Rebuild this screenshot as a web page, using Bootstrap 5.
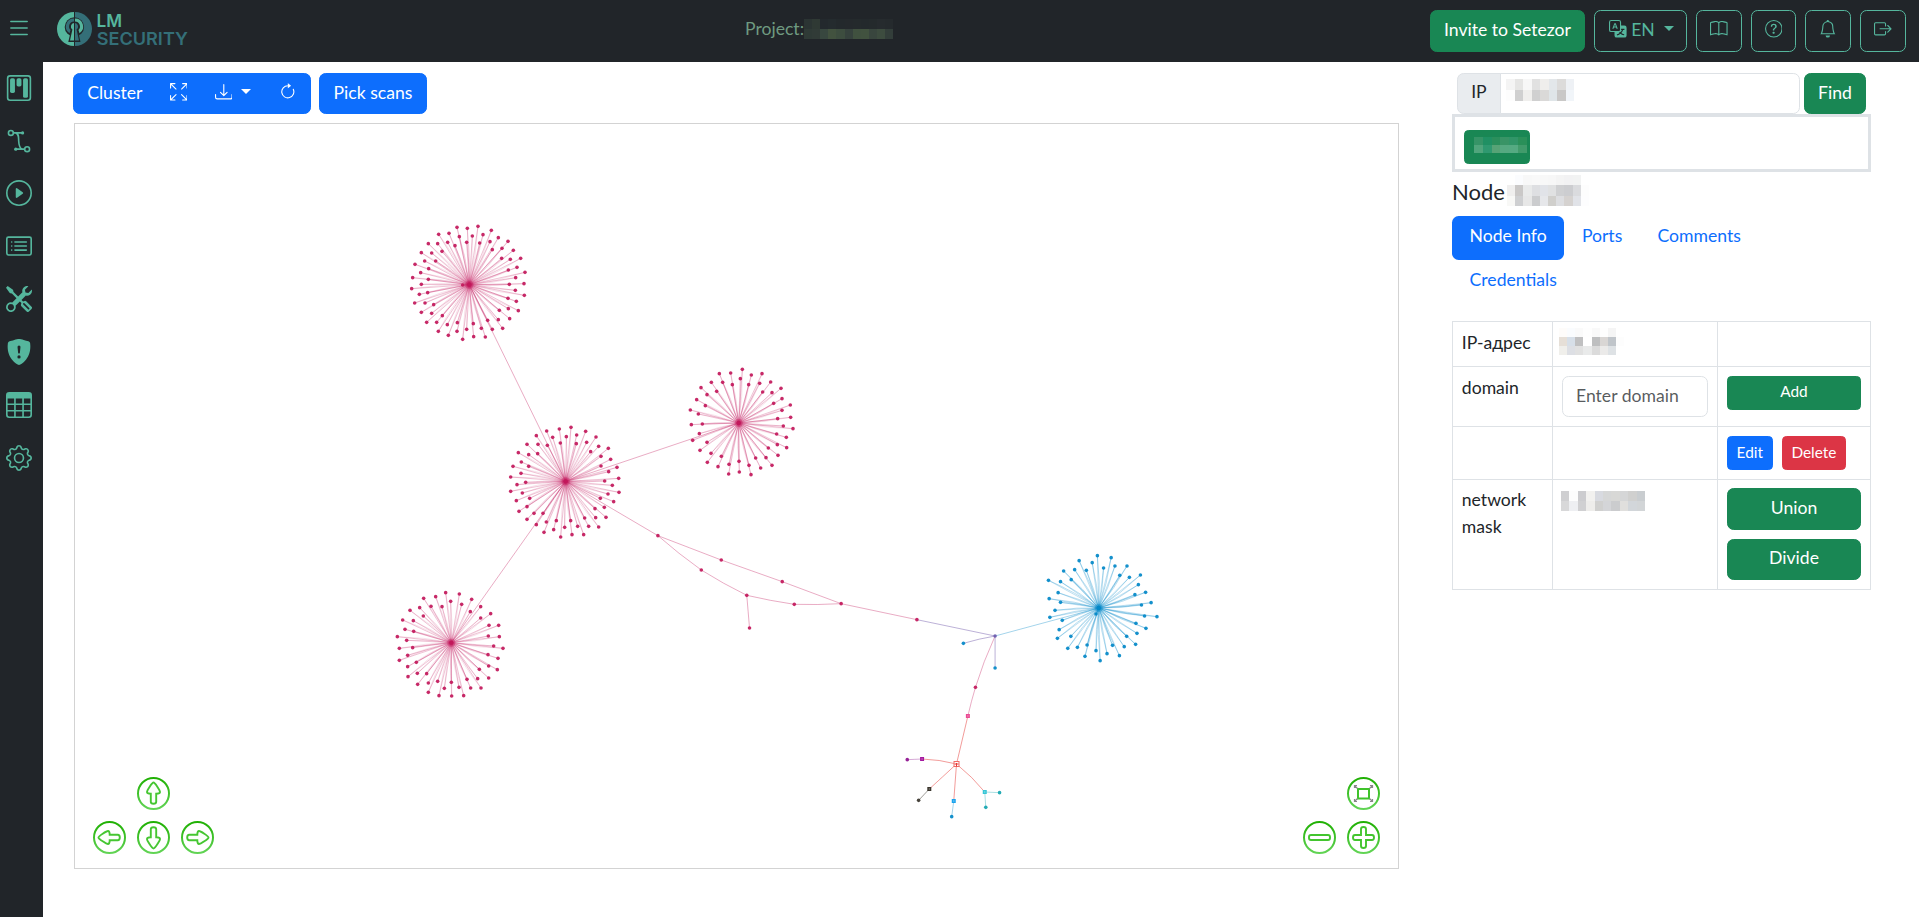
<!DOCTYPE html>
<html lang="en">
<head>
<meta charset="utf-8">
<meta name="viewport" content="width=device-width, initial-scale=1">
<title>Network map</title>
<link href="https://cdn.jsdelivr.net/npm/bootstrap@5.3.0/dist/css/bootstrap.min.css" rel="stylesheet">
<style>
:root { font-size: 17.6px; --teal: #55b69d; --teal-dark: #346f78; }
body { font-family: Lato, "Liberation Sans", sans-serif; height: 919px; overflow: hidden; background: #fff; }
svg.ic { width: 1em; height: 1em; fill: currentColor; vertical-align: -.125em; }
.btn { --bs-btn-padding-x: .75rem; padding-top: calc(.375rem - 1px); padding-bottom: calc(.375rem + 1px); }
.btn-sm { --bs-btn-padding-x: .5rem; padding-top: calc(.25rem - .8px); padding-bottom: calc(.25rem + .8px); }
.topbar { height: 62px; padding: 0 13px 0 6px; background: #212529; }
.burger { color: var(--teal); font-size: 26px; line-height: 1; padding: 0; border: 0; background: none; margin-top: -6px; }
.logo-mark { margin-left: 24px; margin-top: -1px; overflow: visible; }
.project { color: #6f9a80; margin-top: -3px; }
.btn-teal { --bs-btn-color: var(--teal); --bs-btn-border-color: var(--teal); --bs-btn-hover-bg: var(--teal); --bs-btn-hover-color: #212529; }
.btn-lang { width: 93px; padding-left: 12px; padding-right: 10px; white-space: nowrap; }
.btn-lang::after { margin-left: 9px; }
.rail { width: 43px; height: 855px; background: #212529; color: var(--teal); padding: 12.7px 0 0 6px; gap: 26.85px; font-size: 26px; line-height: 1; }
.rail a { color: inherit; display: block; height: 26px; }
.rail svg.ic { display: block; }
.workspace { padding: 11px 0 0 30px; width: 1356px; }
.toolbar { height: 41px; }
.toolbar .btn-group > .btn.dropdown-toggle { border-radius: 0; }
.map { width: 1325px; height: 746px; border: 1px solid #d3d3d3; margin: 9px 0 0 1px; }
.map-nav { bottom: 14px; display: grid; gap: 11px; }
.map-nav svg { width: 33px; height: 33px; display: block; }
.map-nav-move { left: 18px; grid-template-columns: repeat(3, 33px); }
.map-nav-zoom { right: 18px; grid-template-columns: repeat(2, 33px); }
.side { width: 419px; margin-left: 53px; padding-top: 11px; }
.found { border: 3px solid #dee2e6; height: 58px; padding: 13px 9px; }
.node-title { font-size: 22px; font-weight: 400; height: 26px; margin: 7px 0 11px; }
.side .nav-link { padding-top: calc(.5rem - 2px); padding-bottom: calc(.5rem + 2px); }
.mosaic { display: block; shape-rendering: crispEdges; }
.search-ip { padding: 0 5px; height: 41px; gap: 4px; }
.search-ip .input-group-text { background: #e9ecef; padding-top: 4px; }
.info-table td { padding: .5rem; }
.info-table td:first-child { padding-top: calc(.5rem - 1px); padding-bottom: calc(.5rem + 1px); }
.info-table td:nth-child(2) { padding-left: .5rem; }
.btn-narrow { padding-left: 9px; padding-right: 9px; }
</style>
</head>
<body>
<header class="topbar d-flex align-items-center justify-content-between position-relative">
  <div class="d-flex align-items-center">
    <button class="burger" aria-label="Menu"><svg class="ic" viewBox="0 0 16 16"><path fill-rule="evenodd" d="M2.5 12a.5.5 0 0 1 .5-.5h10a.5.5 0 0 1 0 1H3a.5.5 0 0 1-.5-.5zm0-4a.5.5 0 0 1 .5-.5h10a.5.5 0 0 1 0 1H3a.5.5 0 0 1-.5-.5zm0-4a.5.5 0 0 1 .5-.5h10a.5.5 0 0 1 0 1H3a.5.5 0 0 1-.5-.5z"/></svg></button>
    <svg class="logo-mark" width="140" height="40" viewBox="0 0 140 40">
      <path d="M18 1A17 17 0 0 0 18 35Z" fill="#55b69d"/><path d="M19 1A17 17 0 0 1 19 35Z" fill="#346f78"/>
      <circle cx="18.4" cy="16" r="9.7" fill="#212529"/>
      <path d="M18 7.5a8 8 0 0 0-4.5 14.700l1-3.200a5 5 0 0 1 3.500-8.500z" fill="#346f78"/>
      <path d="M19 7.500a8 8 0 0 1 4.500 14.700l-1-3.200a5 5 0 0 0-3.500-8.500z" fill="#55b69d"/>
      <path d="M14.800 20l-2.500 11h12.200l-2.500-11z" fill="#212529"/>
      <path d="M18 12a3.600 3.600 0 0 0-1.600 6.500L14 29.500h4z" fill="#55b69d"/><path d="M19 12a3.600 3.600 0 0 1 1.600 6.500L23 29.500h-4z" fill="#346f78"/>
      <text x="40.500" y="16" font-family="Inter,sans-serif" font-weight="600" font-size="17.800" textLength="25.500" lengthAdjust="spacingAndGlyphs" fill="#55b69d">LM</text>
      <text x="40.700" y="34.200" font-family="Inter,sans-serif" font-weight="600" font-size="17.800" textLength="91.300" lengthAdjust="spacingAndGlyphs" fill="#346f78">SECURITY</text>
    </svg>
  </div>
  <div class="project d-flex align-items-center position-absolute" style="left:745px"><span>Project:</span>
    <svg class="mosaic" data-cell="8.1" data-row="10" data-rows="2b3433 2f3934 23292d 242b2e 23292c 24292c 242a2c 23292c 242a2c 262b2e 252a2d|2f3a36 313b37 38473f 42523f 3d4d3f 36423d 40513f 41523f 39463e 3d4c3f 333e3a"></svg>
  </div>
  <div class="topbar-actions d-flex gap-2">
    <button class="btn btn-success">Invite to Setezor</button>
    <button class="btn btn-teal btn-lang dropdown-toggle"><svg class="ic" viewBox="0 0 16 16"><path d="M4.545 6.714 4.110 8H3l1.862-5h1.284L8 8H6.833l-.435-1.286H4.545zm1.634-.736L5.500 3.956h-.049l-.679 2.022H6.180z"/><path d="M0 2a2 2 0 0 1 2-2h7a2 2 0 0 1 2 2v3h3a2 2 0 0 1 2 2v7a2 2 0 0 1-2 2H7a2 2 0 0 1-2-2v-3H2a2 2 0 0 1-2-2V2zm2-1a1 1 0 0 0-1 1v7a1 1 0 0 0 1 1h7a1 1 0 0 0 1-1V2a1 1 0 0 0-1-1H2zm7.138 9.995c.193.301.402.583.630.846-.748.575-1.673 1.001-2.768 1.292.178.217.451.635.555.867 1.125-.359 2.080-.844 2.886-1.494.777.665 1.739 1.165 2.930 1.472.133-.254.414-.673.629-.890-1.125-.253-2.057-.694-2.820-1.284.681-.747 1.222-1.651 1.621-2.757H14V8h-3v1.047h.765c-.318.844-.740 1.546-1.272 2.130a6.066 6.066 0 0 1-.415-.492 1.988 1.988 0 0 1-.940.310z"/></svg> EN</button>
    <button class="btn btn-teal" aria-label="Docs"><svg class="ic" viewBox="0 0 16 16"><path d="M1 2.828c.885-.370 2.154-.769 3.388-.893 1.330-.134 2.458.063 3.112.752v9.746c-.935-.530-2.120-.603-3.213-.493-1.180.120-2.370.461-3.287.811V2.828zm7.500-.141c.654-.689 1.782-.886 3.112-.752 1.234.124 2.503.523 3.388.893v9.923c-.918-.350-2.107-.692-3.287-.810-1.094-.111-2.278-.039-3.213.492V2.687zM8 1.783C7.015.936 5.587.810 4.287.940c-1.514.153-3.042.672-3.994 1.105A.5.5 0 0 0 0 2.500v11a.5.5 0 0 0 .707.455c.882-.400 2.303-.881 3.680-1.020 1.409-.142 2.590.087 3.223.877a.5.5 0 0 0 .780 0c.633-.790 1.814-1.019 3.222-.877 1.378.139 2.800.620 3.681 1.020A.5.5 0 0 0 16 13.500v-11a.5.5 0 0 0-.293-.455c-.952-.433-2.480-.952-3.994-1.105C10.413.809 8.985.936 8 1.783z"/></svg></button>
    <button class="btn btn-teal" aria-label="Help"><svg class="ic" viewBox="0 0 16 16"><path d="M8 15A7 7 0 1 1 8 1a7 7 0 0 1 0 14zm0 1A8 8 0 1 0 8 0a8 8 0 0 0 0 16z"/><path d="M5.255 5.786a.237.237 0 0 0 .241.247h.825c.138 0 .248-.113.266-.250.090-.656.540-1.134 1.342-1.134.686 0 1.314.343 1.314 1.168 0 .635-.374.927-.965 1.371-.673.489-1.206 1.060-1.168 1.987l.003.217a.25.25 0 0 0 .25.246h.811a.25.25 0 0 0 .25-.25v-.105c0-.718.273-.927 1.010-1.486.609-.463 1.244-.977 1.244-2.056 0-1.511-1.276-2.241-2.673-2.241-1.267 0-2.655.590-2.750 2.286zm1.557 5.763c0 .533.425.927 1.010.927.609 0 1.028-.394 1.028-.927 0-.552-.420-.940-1.029-.940-.584 0-1.009.388-1.009.940z"/></svg></button>
    <button class="btn btn-teal" aria-label="Notifications"><svg class="ic" viewBox="0 0 16 16"><path d="M8 16a2 2 0 0 0 2-2H6a2 2 0 0 0 2 2zM8 1.918l-.797.161A4.002 4.002 0 0 0 4 6c0 .628-.134 2.197-.459 3.742-.160.767-.376 1.566-.663 2.258h10.244c-.287-.692-.502-1.490-.663-2.258C12.134 8.197 12 6.628 12 6a4.002 4.002 0 0 0-3.203-3.920L8 1.917zM14.220 12c.223.447.481.801.780 1H1c.299-.199.557-.553.780-1C2.680 10.200 3 6.880 3 6c0-2.420 1.720-4.440 4.005-4.901a1 1 0 1 1 1.990 0A5.002 5.002 0 0 1 13 6c0 .880.320 4.200 1.220 6z"/></svg></button>
    <button class="btn btn-teal" aria-label="Log out"><svg class="ic" viewBox="0 0 16 16"><path fill-rule="evenodd" d="M10 12.500a.5.5 0 0 1-.5.5h-8a.5.5 0 0 1-.5-.5v-9a.5.5 0 0 1 .5-.5h8a.5.5 0 0 1 .5.5v2a.5.5 0 0 0 1 0v-2A1.500 1.500 0 0 0 9.500 2h-8A1.500 1.500 0 0 0 0 3.500v9A1.500 1.500 0 0 0 1.500 14h8a1.500 1.500 0 0 0 1.500-1.500v-2a.5.5 0 0 0-1 0v2z"/><path fill-rule="evenodd" d="M15.854 8.354a.5.5 0 0 0 0-.708l-3-3a.5.5 0 0 0-.708.708L14.293 7.500H5.500a.5.5 0 0 0 0 1h8.793l-2.147 2.146a.5.5 0 0 0 .708.708l3-3z"/></svg></button>
  </div>
</header>

<main class="d-flex align-items-start">
  <nav class="rail d-flex flex-column flex-shrink-0">
    <a href="#" aria-label="Projects"><svg class="ic" viewBox="0 0 16 16"><rect x="1" y=".5" width="14" height="15" rx="1.500" fill="none" stroke="currentColor"/><rect x="2.500" y="2" width="3" height="9" rx="1"/><rect x="6.500" y="2" width="3" height="5" rx="1"/><rect x="10.500" y="2" width="3" height="12" rx="1"/></svg></a>
    <a href="#" aria-label="Map"><svg class="ic" viewBox="0 0 16 16"><g fill="none" stroke="currentColor"><circle cx="3" cy="3" r="1.500"/><circle cx="13" cy="13" r="1.500"/><path d="M4.500 3H10M5.800 3c2.200.600 1.900 2.400 2 4.800s.300 4.600 2.200 5.200M11.500 13H6"/></g><circle cx="10.200" cy="3" r="1"/><circle cx="6" cy="13" r="1"/></svg></a>
    <a href="#" aria-label="Tasks"><svg class="ic" viewBox="0 0 16 16"><path d="M8 15A7 7 0 1 1 8 1a7 7 0 0 1 0 14zm0 1A8 8 0 1 0 8 0a8 8 0 0 0 0 16z"/><path d="M6.271 5.055a.5.5 0 0 1 .520.038l3.500 2.500a.5.5 0 0 1 0 .814l-3.500 2.500A.5.5 0 0 1 6 10.500v-5a.5.5 0 0 1 .271-.445z"/></svg></a>
    <a href="#" aria-label="Info"><svg class="ic" viewBox="0 0 16 16"><path d="M14.500 3a.5.5 0 0 1 .5.5v9a.5.5 0 0 1-.5.5h-13a.5.5 0 0 1-.5-.5v-9a.5.5 0 0 1 .5-.5h13zm-13-1A1.500 1.500 0 0 0 0 3.500v9A1.500 1.500 0 0 0 1.500 14h13a1.500 1.500 0 0 0 1.500-1.500v-9A1.500 1.500 0 0 0 14.500 2h-13z"/><path d="M5 8a.5.5 0 0 1 .5-.5h7a.5.5 0 0 1 0 1h-7A.5.5 0 0 1 5 8zm0-2.500a.5.5 0 0 1 .5-.5h7a.5.5 0 0 1 0 1h-7a.5.5 0 0 1-.5-.5zm0 5a.5.5 0 0 1 .5-.5h7a.5.5 0 0 1 0 1h-7a.5.5 0 0 1-.5-.5zm-1-5a.5.5 0 1 1-1 0 .5.5 0 0 1 1 0zM4 8a.5.5 0 1 1-1 0 .5.5 0 0 1 1 0zm0 2.500a.5.5 0 1 1-1 0 .5.5 0 0 1 1 0z"/></svg></a>
    <a href="#" aria-label="Tools"><svg class="ic" viewBox="0 0 16 16"><path d="M1 0 0 1l2.200 3.081a1 1 0 0 0 .815.419h.070a1 1 0 0 1 .708.293l2.675 2.675-2.617 2.654A3.003 3.003 0 0 0 0 13a3 3 0 1 0 5.878-.851l2.654-2.617.968.968-.305.914a1 1 0 0 0 .242 1.023l3.270 3.270a.997.997 0 0 0 1.414 0l1.586-1.586a.997.997 0 0 0 0-1.414l-3.270-3.270a1 1 0 0 0-1.023-.242L10.500 9.500l-.960-.960 2.680-2.643A3.005 3.005 0 0 0 16 3c0-.269-.035-.530-.102-.777l-2.140 2.141L12 4l-.364-1.757L13.777.102a3 3 0 0 0-3.675 3.680L7.462 6.460 4.793 3.793a1 1 0 0 1-.293-.707v-.071a1 1 0 0 0-.419-.814L1 0zm9.646 10.646a.5.5 0 0 1 .708 0l2.914 2.915a.5.5 0 0 1-.707.707l-2.915-2.914a.5.5 0 0 1 0-.708zM3 11l.471.242.529.026.287.445.445.287.026.529L5 13l-.242.471-.026.529-.445.287-.287.445-.529.026L3 15l-.471-.242L2 14.732l-.287-.445L1.268 14l-.026-.529L1 13l.242-.471.026-.529.445-.287.287-.445.529-.026L3 11z"/></svg></a>
    <a href="#" aria-label="Vulnerabilities"><svg class="ic" viewBox="0 0 16 16"><path fill-rule="evenodd" d="M8 0c-.690 0-1.843.265-2.928.560-1.110.300-2.229.655-2.887.870a1.540 1.540 0 0 0-1.044 1.262c-.596 4.477.787 7.795 2.465 9.990a11.777 11.777 0 0 0 2.517 2.453c.386.273.744.482 1.048.625.280.132.581.240.829.240s.548-.108.829-.240a7.159 7.159 0 0 0 1.048-.625 11.775 11.775 0 0 0 2.517-2.453c1.678-2.195 3.061-5.513 2.465-9.990a1.541 1.541 0 0 0-1.044-1.263 62.467 62.467 0 0 0-2.887-.870C9.843.266 8.690 0 8 0zm-.550 8.502L7.100 4.995a.905.905 0 1 1 1.800 0l-.350 3.507a.552.552 0 0 1-1.100 0zM8.002 12a1 1 0 1 1 0-2 1 1 0 0 1 0 2z"/></svg></a>
    <a href="#" aria-label="Reports"><svg class="ic" viewBox="0 0 16 16"><path d="M0 2a2 2 0 0 1 2-2h12a2 2 0 0 1 2 2v12a2 2 0 0 1-2 2H2a2 2 0 0 1-2-2V2zm15 2h-4v3h4V4zm0 4h-4v3h4V8zm0 4h-4v3h3a1 1 0 0 0 1-1v-2zm-5 3v-3H6v3h4zm-5 0v-3H1v2a1 1 0 0 0 1 1h3zm-4-4h4V8H1v3zm0-4h4V4H1v3zm5-3v3h4V4H6zm4 4H6v3h4V8z"/></svg></a>
    <a href="#" aria-label="Settings"><svg class="ic" viewBox="0 0 16 16"><path d="M8 4.754a3.246 3.246 0 1 0 0 6.492 3.246 3.246 0 0 0 0-6.492zM5.754 8a2.246 2.246 0 1 1 4.492 0 2.246 2.246 0 0 1-4.492 0z"/><path d="M9.796 1.343c-.527-1.790-3.065-1.790-3.592 0l-.094.319a.873.873 0 0 1-1.255.520l-.292-.160c-1.640-.892-3.433.902-2.540 2.541l.159.292a.873.873 0 0 1-.520 1.255l-.319.094c-1.790.527-1.790 3.065 0 3.592l.319.094a.873.873 0 0 1 .520 1.255l-.160.292c-.892 1.640.901 3.434 2.541 2.540l.292-.159a.873.873 0 0 1 1.255.520l.094.319c.527 1.790 3.065 1.790 3.592 0l.094-.319a.873.873 0 0 1 1.255-.520l.292.160c1.640.893 3.434-.902 2.540-2.541l-.159-.292a.873.873 0 0 1 .520-1.255l.319-.094c1.790-.527 1.790-3.065 0-3.592l-.319-.094a.873.873 0 0 1-.520-1.255l.160-.292c.893-1.640-.902-3.433-2.541-2.540l-.292.159a.873.873 0 0 1-1.255-.520l-.094-.319zm-2.633.283c.246-.835 1.428-.835 1.674 0l.094.319a1.873 1.873 0 0 0 2.693 1.115l.291-.160c.764-.415 1.600.420 1.184 1.185l-.159.292a1.873 1.873 0 0 0 1.116 2.692l.318.094c.835.246.835 1.428 0 1.674l-.319.094a1.873 1.873 0 0 0-1.115 2.693l.160.291c.415.764-.420 1.600-1.185 1.184l-.291-.159a1.873 1.873 0 0 0-2.693 1.116l-.094.318c-.246.835-1.428.835-1.674 0l-.094-.319a1.873 1.873 0 0 0-2.692-1.115l-.292.160c-.764.415-1.600-.420-1.184-1.185l.159-.291A1.873 1.873 0 0 0 1.945 8.930l-.319-.094c-.835-.246-.835-1.428 0-1.674l.319-.094A1.873 1.873 0 0 0 3.060 4.377l-.160-.292c-.415-.764.420-1.600 1.185-1.184l.292.159a1.873 1.873 0 0 0 2.692-1.115l.094-.319z"/></svg></a>
  </nav>

  <section class="workspace flex-shrink-0">
    <div class="toolbar d-flex gap-2">
      <div class="btn-group">
        <button class="btn btn-primary">Cluster</button>
        <button class="btn btn-primary" aria-label="Fullscreen"><svg class="ic" viewBox="0 0 16 16"><path fill-rule="evenodd" d="M5.828 10.172a.5.5 0 0 0-.707 0l-4.096 4.096V11.500a.5.5 0 0 0-1 0v3.975a.5.5 0 0 0 .5.5H4.500a.5.5 0 0 0 0-1H1.732l4.096-4.096a.5.5 0 0 0 0-.707zm4.344 0a.5.5 0 0 1 .707 0l4.096 4.096V11.500a.5.5 0 1 1 1 0v3.975a.5.5 0 0 1-.5.5H11.500a.5.5 0 0 1 0-1h2.768l-4.096-4.096a.5.5 0 0 1 0-.707zm0-4.344a.5.5 0 0 0 .707 0l4.096-4.096V4.500a.5.5 0 1 0 1 0V.525a.5.5 0 0 0-.5-.5H11.500a.5.5 0 0 0 0 1h2.768l-4.096 4.096a.5.5 0 0 0 0 .707zm-4.344 0a.5.5 0 0 1-.707 0L1.025 1.732V4.500a.5.5 0 0 1-1 0V.525a.5.5 0 0 1 .5-.5H4.500a.5.5 0 0 1 0 1H1.732l4.096 4.096a.5.5 0 0 1 0 .707z"/></svg></button>
        <button class="btn btn-primary dropdown-toggle" aria-label="Download"><svg class="ic" viewBox="0 0 16 16"><path d="M.5 9.900a.5.5 0 0 1 .5.5v2.500a1 1 0 0 0 1 1h12a1 1 0 0 0 1-1v-2.500a.5.5 0 0 1 1 0v2.500a2 2 0 0 1-2 2H2a2 2 0 0 1-2-2v-2.500a.5.5 0 0 1 .5-.5z"/><path d="M7.646 11.854a.5.5 0 0 0 .708 0l3-3a.5.5 0 0 0-.708-.708L8.500 10.293V1.500a.5.5 0 0 0-1 0v8.793L5.354 8.146a.5.5 0 1 0-.708.708l3 3z"/></svg> </button>
        <button class="btn btn-primary" aria-label="Refresh"><svg class="ic" viewBox="0 0 16 16"><path fill-rule="evenodd" d="M8 3a5 5 0 1 0 4.546 2.914.5.5 0 0 1 .908-.417A6 6 0 1 1 8 2v1z"/><path d="M8 4.466V.534a.250.250 0 0 1 .410-.192l2.360 1.966c.120.100.120.284 0 .384L8.410 4.658A.250.250 0 0 1 8 4.466z"/></svg></button>
      </div>
      <button class="btn btn-primary">Pick scans</button>
    </div>
    <div class="map position-relative">
      <svg id="graph" class="d-block" width="1323" height="744" viewBox="75 124 1323 744"></svg>
      <svg width="0" height="0" class="position-absolute"><defs>
        <linearGradient id="ring" x1="0" y1="0" x2="0" y2="1"><stop offset="0" stop-color="#1fb003"/><stop offset="1" stop-color="#62d455"/></linearGradient>
        <g id="disc"><circle cx="16.500" cy="16.500" r="15.500" fill="#fff" stroke="url(#ring)" stroke-width="2"/></g>
        <path id="arrow" d="M16.500 5.500c1.500 0 6.500 8 6.500 9.500s-1.800 1.700-3.800 1.700v8c0 1.600-1 2.100-2.700 2.100s-2.700-.500-2.700-2.100v-8c-2 0-3.800-.200-3.800-1.700s5-9.500 6.500-9.500z" fill="#fbfffa" stroke="#45c631" stroke-width="1.900"/>
      </defs></svg>
      <div class="map-nav map-nav-move position-absolute">
        <span></span><svg viewBox="0 0 33 33"><use href="#disc"/><use href="#arrow"/></svg><span></span>
        <svg viewBox="0 0 33 33"><use href="#disc"/><use href="#arrow" transform="rotate(-90 16.500 16.500)"/></svg>
        <svg viewBox="0 0 33 33"><use href="#disc"/><use href="#arrow" transform="rotate(180 16.500 16.500)"/></svg>
        <svg viewBox="0 0 33 33"><use href="#disc"/><use href="#arrow" transform="rotate(90 16.500 16.500)"/></svg>
      </div>
      <div class="map-nav map-nav-zoom position-absolute">
        <span></span><svg viewBox="0 0 33 33"><use href="#disc"/><rect x="11" y="12" width="11" height="9.500" fill="#fff" stroke="#3fc32b" stroke-width="2"/><path d="M7.500 11V8.500H10M7.500 8.500l3 3M23 8.500h2.500V11M25.500 8.500l-3 3M7.500 22v2.500H10M7.500 24.500l3-3M23 24.500h2.500V22M25.500 24.500l-3-3" fill="none" stroke="#888" stroke-width="1.200"/></svg>
        <svg viewBox="0 0 33 33"><use href="#disc"/><rect x="6" y="14" width="21" height="5" rx="2" fill="#fff" stroke="#43c52f" stroke-width="1.900"/></svg>
        <svg viewBox="0 0 33 33"><use href="#disc"/><path d="M14 8q0-2 2.500-2T19 8v6h6q2 0 2 2.500T25 19h-6v6q0 2-2.500 2T14 25v-6H8q-2 0-2-2.500T8 14h6z" fill="#fff" stroke="#43c52f" stroke-width="1.900"/></svg>
      </div>
    </div>
  </section>

  <aside class="side flex-shrink-0">
    <div class="search-ip d-flex">
      <div class="input-group">
        <span class="input-group-text">IP</span>
        <div class="form-control p-0 ps-1"><svg class="mosaic" style="margin:5px 0 0 1px" data-cell="8.5" data-row="11" data-rows="f4f4f4 e5e5e4 f7f7f7 e1e1e1 efeeec e3e7ea dcdbda eef1f5|fdfdfd d0d0d0 f0efed d0d0d0 dad9d8 dfe5e8 c9c8c7 f1f5f9"></svg></div>
      </div>
      <button class="btn btn-success">Find</button>
    </div>
    <div class="found"><button class="btn btn-success btn-sm btn-narrow d-block" style="width:66px;height:34px;padding-top:0;padding-bottom:0" aria-label="Result"><svg class="mosaic" style="margin-top:-5px" data-cell="8.8" data-row="8" data-rows="369467 209063 2b8f5c 399466 319568 2a9059|50a57c 2f9970 57a376 56a981 55aa82 419b6b"></svg></button></div>
    <h5 class="node-title d-flex align-items-center"><span>Node</span><svg class="mosaic" style="margin:-3px 0 0 2px" data-cell="8.2" data-row="10.400" data-rows="ffffff fbfcfe f8f8f8 f9f9f9 f8f8f8 f7f7f7 f4f4f4 f2f2f3 f2f3f3|f0efee cac8c7 e9eaea dedfe2 e1e3e8 e0e1e2 cfd0d2 cccdd0 dadbde fdfdfd|f8f8f6 cecfd1 e7e7e7 cbccce e6e7ea d0cfcc dddee1 d5d2d0 e1e3e8 fdfdfe"></svg></h5>
    <ul class="nav nav-pills">
      <li class="nav-item"><a class="nav-link active" href="#">Node Info</a></li>
      <li class="nav-item"><a class="nav-link" href="#">Ports</a></li>
      <li class="nav-item"><a class="nav-link" href="#">Comments</a></li>
      <li class="nav-item"><a class="nav-link" href="#">Credentials</a></li>
    </ul>
    <table class="info-table table table-bordered mb-0" style="margin-top:17px;table-layout:fixed">
      <colgroup><col style="width:100px"><col style="width:165px"><col></colgroup>
      <tbody>
      <tr><td>IP-адрес</td><td><svg class="mosaic" style="margin:-3px 0 0 -3px" data-cell="8.150" data-row="9" data-rows="fefcfa fafcfe fafafa fefefe f9f9f9 fefefe f5f5f5|e6dfd7 d7dfe8 c0c0c1 ffffff bebfc0 d9d6d4 c0c5ca fdfdfd|f0efeb dddfe4 e1e1e1 e9eaea dbdbdb ebeae9 dee2e5 ffffff"></svg></td><td></td></tr>
      <tr><td>domain</td><td><input class="form-control" placeholder="Enter domain"></td><td><button class="btn btn-success btn-sm w-100">Add</button></td></tr>
      <tr><td></td><td></td><td><div class="d-flex gap-2"><button class="btn btn-primary btn-sm">Edit</button><button class="btn btn-danger btn-sm">Delete</button></div></td></tr>
      <tr><td>network mask</td><td><svg class="mosaic" style="margin:2.5px 0 0 -1px" data-cell="8.400" data-row="10" data-rows="cfcfd1 fdfdfd cccccf f2f1ef d8dae0 d6d7d7 d8d8d6 d5d6d7 d0d0cf c9cdd0|d8d8d9 eeeff2 d0d0d2 eeedeb d0d0cf d4d5d8 cbccce e0dfdd d2d6da d2d5d7"></svg></td><td><div class="d-grid gap-2"><button class="btn btn-success">Union</button><button class="btn btn-success">Divide</button></div></td></tr>
      </tbody>
    </table>
  </aside>
</main>

<script>
const NS = 'http://www.w3.org/2000/svg';
function add(parent, tag, attrs) {
  const e = document.createElementNS(NS, tag);
  for (const k in attrs) e.setAttribute(k, attrs[k]);
  parent.appendChild(e);
  return e;
}

// Masked values: rows of coloured cells
document.querySelectorAll('svg.mosaic').forEach(s => {
  const cw = +s.dataset.cell, ch = +s.dataset.row, rows = s.dataset.rows.split('|').map(r => r.split(' '));
  s.setAttribute('width', Math.max(...rows.map(r => r.length)) * cw);
  s.setAttribute('height', rows.length * ch);
  rows.forEach((r, y) => r.forEach((c, x) => add(s, 'rect', { x: x * cw, y: y * ch, width: cw, height: ch, fill: '#' + c })));
});

// Star clusters: origin, horizontal divisor, hub and leaves
const PINK = '#c2185b', BLUE = '#0288c8', SX = 2.9035;
const clusters = [
  { o: [380, 210], hub: [268, 224], color: PINK, leaves: '231,52 262,55 294,49 334,61 176,73 207,70 238,80 277,78 309,74 355,83 384,94 145,101 173,101 203,97 225,107 260,97 299,99 330,95 400,121 366,115 337,119 124,128 155,129 186,124 422,145 365,145 391,148 134,153 167,153 105,163 146,176 122,188 411,172 385,180 435,187 98,203 145,208 407,203 124,223 388,223 432,221 248,225 95,236 143,248 118,253 406,241 433,256 104,279 135,279 161,284 384,265 409,274 124,307 155,310 187,317 358,301 385,296 415,302 140,337 170,337 202,344 232,338 280,341 323,331 355,329 389,326 175,364 231,364 260,358 304,355 337,358 368,355 205,376 248,388 281,380 316,381' },
  { o: [380, 210], hub: [1076, 639], color: PINK, leaves: '1087,478 1018,491 1052,489 1114,495 1146,491 1081,506 994,517 1028,517 1057,524 1106,524 1139,520 1172,516 963,533 1203,535 1010,544 981,554 1148,546 1176,548 950,569 976,587 1206,566 1181,580 1231,585 931,600 955,612 1206,601 1193,626 1232,622 934,644 967,642 1210,648 1239,656 958,671 938,691 981,697 1190,672 1219,682 960,721 993,730 1192,704 1220,713 1165,714 1024,739 982,757 1194,736 1158,743 1127,744 1077,754 1047,763 1107,766 1014,770 1142,774 1176,766 1046,792 1078,786 1113,794' },
  { o: [380, 410], hub: [557, 214], color: PINK, leaves: '573,52 538,57 500,63 469,77 518,82 559,80 590,75 617,64 648,81 441,103 474,103 502,106 541,99 589,101 620,97 656,109 685,115 415,128 446,134 473,131 632,125 663,139 692,148 424,156 399,169 446,169 663,168 711,172 686,185 423,190 392,201 716,205 437,217 411,224 674,213 697,226 392,244 427,249 717,247 684,252 449,265 409,272 661,265 701,275 417,304 441,290 673,292 645,296 462,310 489,310 678,322 441,328 647,323 614,324 469,344 499,336 529,332 572,332 593,349 626,349 656,351 521,359 554,352 492,367 542,381 576,374 611,374' },
  { o: [380, 410], hub: [214, 698], color: PINK, leaves: '197,548 238,552 131,565 167,560 275,568 212,574 245,583 119,593 153,589 186,590 302,590 90,601 271,605 332,611 130,618 302,624 68,630 100,632 327,646 356,646 75,658 101,664 52,680 325,678 358,680 80,691 58,715 98,713 341,708 369,715 83,736 324,734 58,751 354,745 109,757 83,770 326,768 352,779 298,778 112,790 140,791 84,800 293,806 326,804 261,808 173,814 214,817 113,823 145,819 193,835 237,832 272,834 303,834 145,847 177,857 215,858 251,857' },
  { o: [640, 500], sx: SX, hub: [1332, 324], color: BLUE, leaves: '1328,167 1368,173 1275,182 1313,188 1379,198 1414,198 1230,213 1262,209 1296,211 1346,204 1393,226 1453,225 1421,232 1186,241 1221,245 1252,239 1447,254 1214,278 1468,277 1437,284 1188,296 1221,307 1484,308 1456,315 1205,331 1324,342 1190,352 1226,361 1465,348 1501,350 1440,370 1469,385 1217,389 1443,400 1212,415 1251,409 1413,409 1298,435 1439,433 1242,445 1270,442 1372,436 1406,440 1324,452 1356,461 1292,469 1392,467 1336,482' }
];
const g = document.getElementById('graph');
const edges = add(g, 'g', { fill: 'none', 'stroke-width': 1 });
const dots = add(g, 'g', {});
const dot = (x, y, c) => add(dots, 'circle', { cx: x, cy: y, r: 1.8, fill: c, 'fill-opacity': .92 });
const line = (a, b, c, bend, o) => {
  const mx = (a[0] + b[0]) / 2 + (bend ? bend[0] : 0), my = (a[1] + b[1]) / 2 + (bend ? bend[1] : 0);
  add(edges, 'path', { d: `M${a}Q${mx},${my} ${b}`, stroke: c, opacity: o || .36 });
};
const hubs = clusters.map(k => {
  const at = p => [k.o[0] + p[0] / (k.sx || 3), k.o[1] + p[1] / 3], h = at(k.hub);
  k.leaves.split(' ').forEach(s => {
    const p = at(s.split(',').map(Number));
    line(h, p, k.color, null, .26);
    // a second, slightly diverging link to the same host
    const dx = p[0] - h[0], dy = p[1] - h[1];
    line(h, p, k.color, [-dy * .045, dx * .045], k.color === BLUE ? .28 : .13);
    dot(p[0], p[1], k.color);
  });
  add(g, 'circle', { cx: h[0], cy: h[1], r: 4, fill: k.color, opacity: .3 });
  add(g, 'circle', { cx: h[0], cy: h[1], r: 2.2, fill: k.color });
  return h;
});

// Backbone between clusters
const P = (x, y) => [640 + x / SX, 500 + y / 3];
const n = { a: P(52, 107), b: P(236, 180), c: P(413, 245), d: P(178, 210), e: P(310, 286), f: P(318, 384), h: P(448, 313), i: P(584, 311), j: P(804, 359), k: P(1031, 408), l: P(939, 430), m: P(1031, 504), o: P(974, 562), p: P(952, 648), q: P(919, 792), r: P(819, 777), s: P(776, 779), t: P(840, 867), u: P(809, 901), v: P(911, 903), w: P(905, 950), x: P(1001, 876), y: P(1044, 878), z: P(1004, 922) };
const RED = '#e53935', VIO = '#7a63b0';
line(hubs[0], hubs[2], PINK); line(hubs[1], hubs[2], PINK); line(hubs[3], hubs[2], PINK); line(hubs[2], n.a, PINK);
[['a', 'b'], ['b', 'c'], ['c', 'i'], ['a', 'd', [-1, 1]], ['d', 'e', [-1, 1]], ['e', 'f'], ['e', 'h', [0, 1]], ['h', 'i', [0, 1]], ['i', 'j'], ['k', 'o', [-2, 0]], ['o', 'p', [-.5, 0]]].forEach(e => line(n[e[0]], n[e[1]], PINK, e[2]));
line(n.j, n.k, VIO, null, .5); line(n.k, n.l, VIO, [0, -1], .5); line(n.k, n.m, VIO, null, .5); line(n.k, hubs[4], BLUE);
[['p', 'q'], ['q', 'r', [0, -2]], ['q', 't', [-1, 1]], ['q', 'v'], ['q', 'x', [2, -1]]].forEach(e => line(n[e[0]], n[e[1]], RED, e[2], .5));
line(n.r, n.s, '#8e108e'); line(n.t, n.u, '#3a352c', null, .5); line(n.v, n.w, BLUE); line(n.x, n.y, '#12a5b0'); line(n.x, n.z, '#12a5b0');
'abcdefhijo'.split('').forEach(c => dot(...n[c], PINK));
dot(...n.k, '#6a5aac'); dot(...n.l, BLUE); dot(...n.m, BLUE); dot(...n.s, '#8e108e'); dot(...n.u, '#3a352c'); dot(...n.w, BLUE); dot(...n.y, '#12a5b0'); dot(...n.z, '#12a5b0');
const box = (p, c) => { add(dots, 'rect', { x: p[0] - 2, y: p[1] - 2, width: 4, height: 4, fill: c }); add(dots, 'rect', { x: p[0] - .6, y: p[1] - .6, width: 1.2, height: 1.2, fill: '#fff', opacity: .45 }); };
box(n.p, '#ea4a93'); box(n.r, '#a5189f'); box(n.t, '#3a352c'); box(n.v, '#1aa3ee'); box(n.x, '#35c6d6');
add(dots, 'rect', { x: n.q[0] - 2.500, y: n.q[1] - 2.500, width: 5, height: 5, fill: '#fff', stroke: '#f26a66', 'stroke-width': 1 });
add(dots, 'path', { d: `M${n.q[0]},${n.q[1] - 1}v3.500M${n.q[0] - 2},${n.q[1]}h4`, stroke: RED, 'stroke-width': 1 });
</script>
<script src="https://cdn.jsdelivr.net/npm/bootstrap@5.3.0/dist/js/bootstrap.bundle.min.js"></script>
</body>
</html>
